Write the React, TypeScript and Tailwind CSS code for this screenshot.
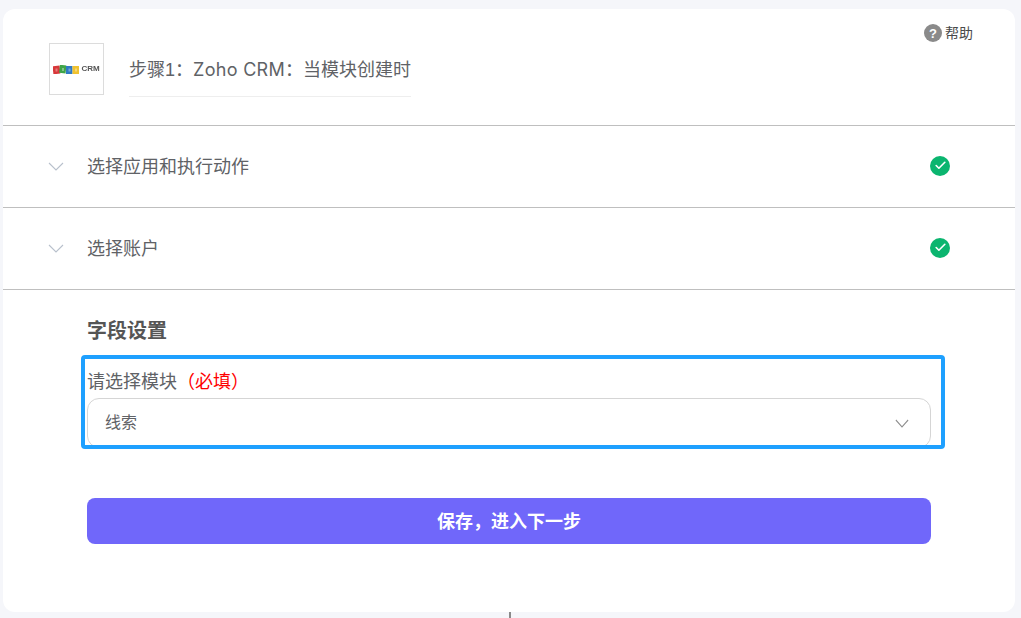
import { Check } from 'lucide-react';

const FONT = "font-['Liberation_Sans','Noto_Sans_CJK_SC',sans-serif]";

function Chevron({ className, width = 16 }: { className: string; width?: number }) {
  return (
    <svg width={width} height="9" viewBox="0 0 16 9" preserveAspectRatio="none" fill="none" className={className}>
      <polyline points="1,1 8,8 15,1" stroke="currentColor" strokeWidth="1.1" />
    </svg>
  );
}

function ZohoLogo() {
  return (
    <div className="flex h-[52px] w-[55px] shrink-0 items-center justify-center border border-[#dcdcdc] bg-white">
      <div className="flex items-center gap-[2px] blur-[0.4px]">
        <svg width="26" height="9" viewBox="0 0 26 9">
          <rect x="0" y="1" width="7" height="8" fill="#d8383a" transform="rotate(-6 3 5)" />
          <rect x="6.5" y="0" width="6.5" height="8" fill="#3fa548" transform="rotate(6 9 4)" />
          <rect x="13" y="1" width="6.5" height="8" fill="#2f7ac4" />
          <rect x="19.5" y="1" width="6.5" height="8" fill="#f0c22f" />
          <rect x="2.5" y="3.5" width="2" height="3" fill="#fff" opacity="0.35" />
          <rect x="9" y="3" width="2" height="3" fill="#fff" opacity="0.35" />
          <rect x="15.5" y="3.5" width="2" height="3" fill="#fff" opacity="0.35" />
          <rect x="22" y="3.5" width="2" height="3" fill="#fff" opacity="0.35" />
        </svg>
        <span className="text-[8px] leading-none font-bold text-[#555]">CRM</span>
      </div>
    </div>
  );
}

function DoneRow({ title }: { title: string }) {
  return (
    <div className="flex h-[82px] items-center border-b border-[#bfbfbf] pr-[65px] pl-[45px]">
      <Chevron className="text-[#b8c0cc]" />
      <span className="ml-[23px] flex-1 text-[18px] leading-[24px] text-[#606266]">{title}</span>
      <span className="mb-[2px] flex h-5 w-5 items-center justify-center rounded-full bg-[#0bb56f]">
        <Check className="h-[13px] w-[13px] text-white" strokeWidth={3} />
      </span>
    </div>
  );
}

export default function App() {
  return (
    <div className={`h-[618px] w-[1021px] overflow-hidden bg-[#f5f6fa] pt-[9px] pr-[6px] pl-[3px] ${FONT}`}>
      <div className="relative h-[603px] rounded-[12px] bg-white">
        {/* Help link */}
        <div className="absolute top-[15px] right-[42px] flex items-center gap-[3px]">
          <span className="flex h-[18px] w-[18px] items-center justify-center rounded-full bg-[#8a8a8a] text-[13px] leading-none font-bold text-white">?</span>
          <span className="text-[14px] leading-[18px] text-[#4a4a4a]">帮助</span>
        </div>

        {/* Step header */}
        <div className="flex h-[117px] items-start border-b border-[#bfbfbf] pt-[34px] pl-[46px]">
          <ZohoLogo />
          <div className="ml-[25px] flex h-[54px] items-center border-b border-[#eeeeee] pt-[1px] text-[18px] text-[#606266]">
            <div>
              步骤1：<span className="font-['Inter'] tracking-[0.3px]">Zoho CRM</span>：当模块创建时
            </div>
          </div>
        </div>

        <DoneRow title="选择应用和执行动作" />
        <DoneRow title="选择账户" />

        {/* Field settings */}
        <div className="px-[84px] pt-[27px]">
          <h2 className="text-[20px] leading-[28px] font-bold text-[#555555]">字段设置</h2>
          <div className="mt-[10px] -mr-[14px] -ml-[6px] h-[94px] overflow-hidden rounded-[4px] border-4 border-[#1ea0ff] pt-[11px] pr-[10px] pl-[2px]">
            <div className="text-[18px] leading-[24px] text-[#606266]">
              请选择模块<span className="text-[#ff0000]">（必填）</span>
            </div>
            <div className="mt-[4px] flex h-[50px] items-center justify-between rounded-[12px] border border-[#d5d5d5] pr-[21px] pl-[17px]">
              <span className="text-[16px] text-[#606266]">线索</span>
              <Chevron className="text-[#8c8c8c]" width={14} />
            </div>
          </div>
          <button className="mt-[49px] flex h-[46px] w-full items-center justify-center rounded-[8px] bg-[#7067fa] pt-[3px] text-[18px] font-bold text-white">
            保存，进入下一步
          </button>
        </div>
      </div>
      {/* Connector to next step */}
      <div className="ml-[506px] h-[6px] w-[2px] bg-[#8a8a8a]" />
    </div>
  );
}
